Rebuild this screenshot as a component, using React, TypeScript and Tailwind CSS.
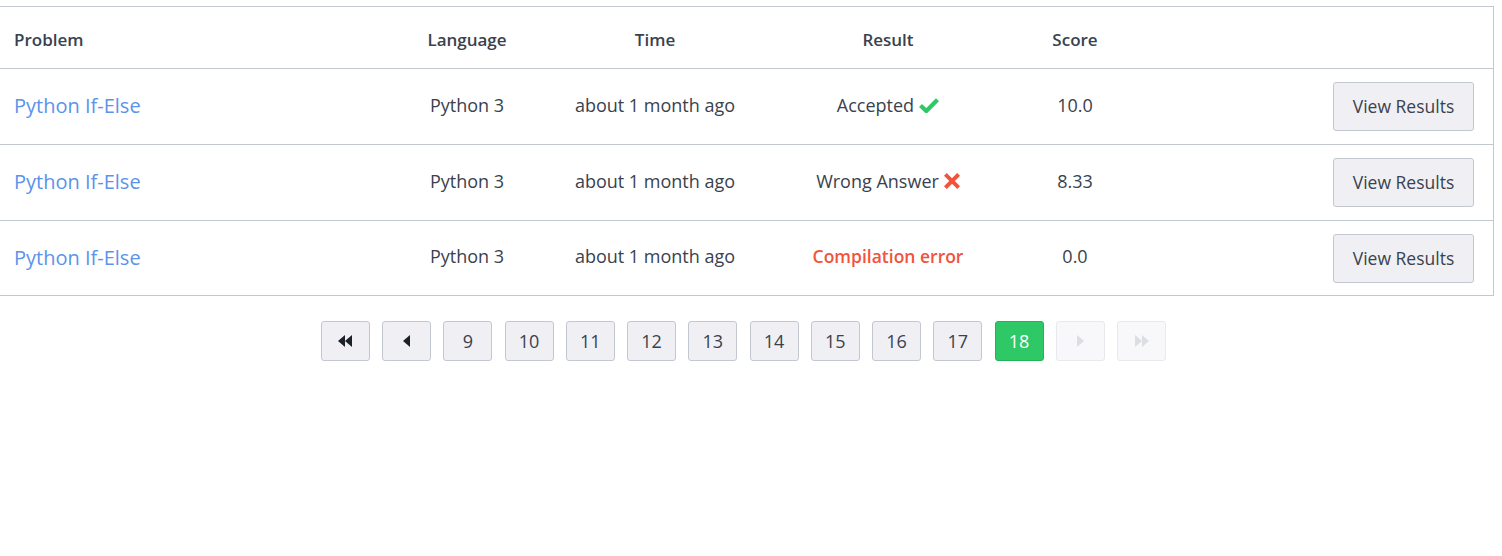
import type { ReactNode } from 'react';

interface Submission {
  problem: string;
  language: string;
  time: string;
  result: 'accepted' | 'wrong' | 'compile';
  score: string;
}

const rows: Submission[] = [
  { problem: 'Python If-Else', language: 'Python 3', time: 'about 1 month ago', result: 'accepted', score: '10.0' },
  { problem: 'Python If-Else', language: 'Python 3', time: 'about 1 month ago', result: 'wrong', score: '8.33' },
  { problem: 'Python If-Else', language: 'Python 3', time: 'about 1 month ago', result: 'compile', score: '0.0' },
];

const cols = 'grid grid-cols-[380px_174px_202px_264px_110px_1fr] items-center';

function Check() {
  return (
    <svg width="20" height="16" viewBox="0 0 20 16" className="inline-block ml-[5px]">
      <path d="M1.5 8.5 L7.3 14 L18.5 2.8" fill="none" stroke="#2ec866" strokeWidth="4.2" strokeLinejoin="miter" />
    </svg>
  );
}

function Cross() {
  return (
    <svg width="16" height="16" viewBox="0 0 16 16" className="inline-block ml-[5px]">
      <path d="M2.8 2.8 L13.2 13.2 M13.2 2.8 L2.8 13.2" stroke="#f2533c" strokeWidth="4" strokeLinecap="square" />
    </svg>
  );
}

function Result({ kind }: { kind: Submission['result'] }) {
  if (kind === 'accepted') return <span className="inline-flex items-center">Accepted<Check /></span>;
  if (kind === 'wrong') return <span className="inline-flex items-center">Wrong Answer<Cross /></span>;
  return <span className="font-semibold text-[17.5px] text-[#f2533c]">Compilation error</span>;
}

function PageBtn({ children, active, disabled }: { children: ReactNode; active?: boolean; disabled?: boolean }) {
  const cls = active
    ? 'bg-[#2ec866] border-[#21b356] text-white'
    : disabled
      ? 'bg-[#f8f8fa] border-[#e8e9ec] text-[#d3d5da]'
      : 'bg-[#f0f0f4] border-[#c2c7d0] text-[#39424e]';
  return (
    <div className={`w-[49px] h-[40px] flex items-center justify-center rounded-[3px] border text-[18px] ${cls}`}>
      {children}
    </div>
  );
}

const Tri = ({ dir, color }: { dir: 'l' | 'r'; color: string }) => (
  <svg width="7" height="12" viewBox="0 0 7 12">
    <path d={dir === 'l' ? 'M7 0 L0 6 L7 12 Z' : 'M0 0 L7 6 L0 12 Z'} fill={color} />
  </svg>
);

export default function App() {
  return (
    <div className="w-[1502px] h-[556px] bg-white text-[#39424e]" style={{ fontFamily: '"Open Sans", "Liberation Sans", sans-serif' }}>
      <div className="w-[1494px] mt-[6px] border-t border-r border-[#c2c7d0]">
        <div className={`${cols} h-[62px] border-b border-[#c2c7d0] text-[17px] font-semibold pt-[4px]`}>
          <div className="pl-[14px]">Problem</div>
          <div className="text-center">Language</div>
          <div className="text-center">Time</div>
          <div className="text-center">Result</div>
          <div className="text-center">Score</div>
          <div />
        </div>
        {rows.map((r, i) => (
          <div key={i} className={`${cols} ${i === 2 ? 'h-[75px]' : 'h-[76px]'} border-b border-[#c2c7d0] text-[18px]`}>
            <div className="pl-[14px] text-[20px] text-[#5b93ea] -mt-[1px]">{r.problem}</div>
            <div className="text-center -mt-[3px]">{r.language}</div>
            <div className="text-center -mt-[3px]">{r.time}</div>
            <div className="text-center -mt-[3px]"><Result kind={r.result} /></div>
            <div className="text-center -mt-[3px]">{r.score}</div>
            <div className="flex justify-end pr-[19px]">
              <button className="w-[141px] h-[49px] rounded-[3px] border border-[#c2c7d0] bg-[#f0f0f4] text-[17.5px] text-[#39424e]">
                View Results
              </button>
            </div>
          </div>
        ))}
      </div>

      {/* pagination */}
      <div className="w-[1487px] flex justify-center gap-[12.25px] mt-[25px]">
        <PageBtn>
          <span className="flex"><Tri dir="l" color="#1c2128" /><Tri dir="l" color="#1c2128" /></span>
        </PageBtn>
        <PageBtn><Tri dir="l" color="#1c2128" /></PageBtn>
        {['9', '10', '11', '12', '13', '14', '15', '16', '17'].map(n => (
          <PageBtn key={n}>{n}</PageBtn>
        ))}
        <PageBtn active>18</PageBtn>
        <PageBtn disabled><Tri dir="r" color="#dcdee3" /></PageBtn>
        <PageBtn disabled>
          <span className="flex"><Tri dir="r" color="#dcdee3" /><Tri dir="r" color="#dcdee3" /></span>
        </PageBtn>
      </div>
    </div>
  );
}
